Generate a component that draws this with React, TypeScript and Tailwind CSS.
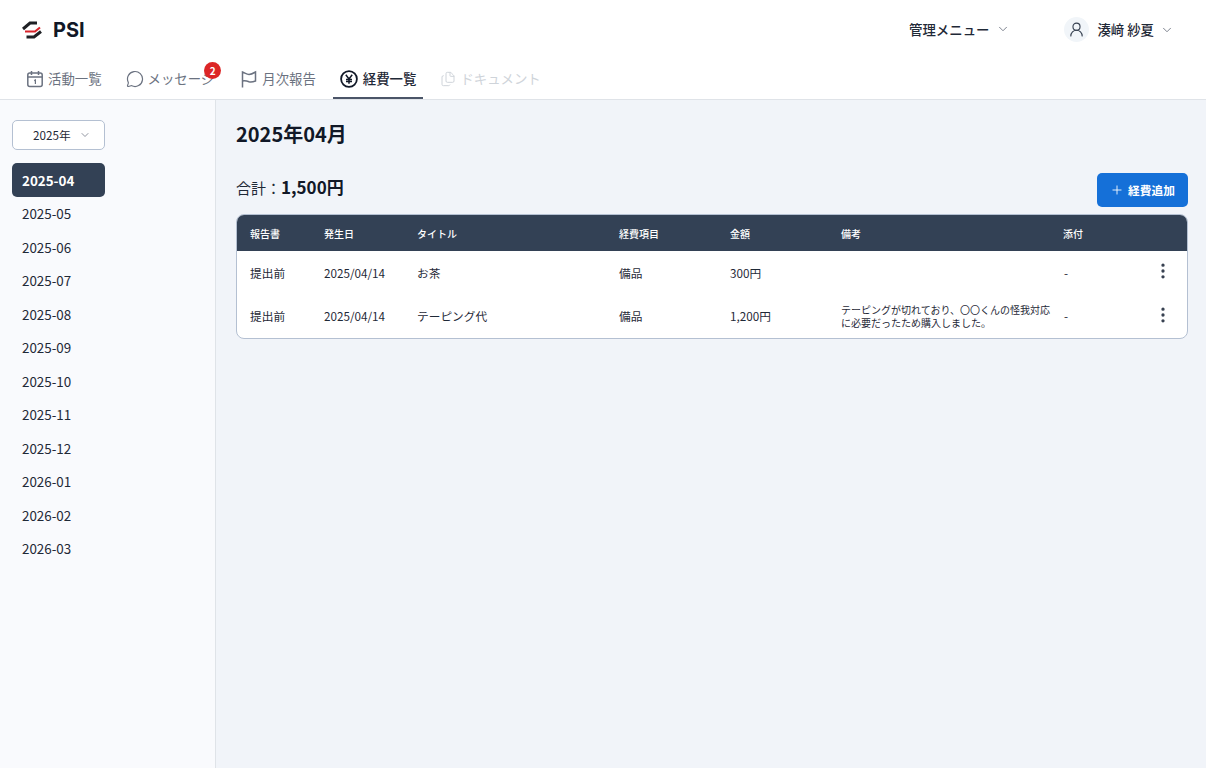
import { ChevronDown, EllipsisVertical, Files, MessageCircle, Plus, UserRound } from "lucide-react";

const months = ["2025-04", "2025-05", "2025-06", "2025-07", "2025-08", "2025-09", "2025-10", "2025-11", "2025-12", "2026-01", "2026-02", "2026-03"];

const columns = "grid grid-cols-[74px_93px_202px_111px_111px_224px_1fr]";

const Logo = () => (
  <svg width="20" height="18" viewBox="0 0 20 18" fill="none" strokeLinejoin="miter">
    <path d="M1 8 L8 2 H15" stroke="#1f2125" strokeWidth="3" />
    <path d="M3 10.5 H13 L18 6.5" stroke="#d8232a" strokeWidth="2.2" />
    <path d="M4.5 16 H12 L19 10.5" stroke="#1f2125" strokeWidth="3" />
  </svg>
);

const CalendarIcon = () => (
  <svg width="18" height="18" viewBox="0 0 18 18" fill="none" stroke="currentColor" strokeWidth="1.5">
    <rect x="1.8" y="3" width="14.4" height="13.6" rx="2" />
    <path d="M5.5 1 V5 M12.5 1 V5 M1.8 7 H16.2" />
    <path d="M8.2 10.6 L9.4 10 V14" strokeWidth="1.2" />
  </svg>
);

const FlagIcon = () => (
  <svg width="18" height="18" viewBox="0 0 18 18" fill="none" stroke="currentColor" strokeWidth="1.5">
    <path d="M2.5 17.5 V2 C5 3 7 4.5 9 4.5 C11 4.5 13 3.5 15.5 2 V11 C13 12 11 12.5 9 11.8 C7 11 5 10.5 2.5 11" />
  </svg>
);

const YenIcon = () => (
  <svg width="18" height="18" viewBox="0 0 18 18" fill="none" stroke="#111827" strokeWidth="1.8">
    <circle cx="9" cy="9" r="7.9" />
    <path d="M5.8 4.8 L9 9 L12.2 4.8 M9 9 V13.8 M6 9.4 H12 M6 11.5 H12" strokeWidth="1.5" />
  </svg>
);

function Tab({ icon, label, active, disabled, badge }: { icon: React.ReactNode; label: string; active?: boolean; disabled?: boolean; badge?: string }) {
  return (
    <div
      className={`relative flex h-[39px] items-center border-b-2 px-[7px] text-[13.4px] ${
        active ? "gap-[5px] border-[#4b5568] font-medium text-[#1f2937]" : "gap-[4px] border-transparent"
      } ${disabled ? "text-[#cfd4da]" : active ? "" : "text-[#6b7280]"} ${badge ? "mr-[2px]" : ""}`}
    >
      {icon}
      <span>{label}</span>
      {badge && (
        <span className="absolute right-[0px] top-[2px] flex h-[17px] w-[17px] items-center justify-center rounded-full bg-[#dc2626] text-[10px] font-bold text-white">
          {badge}
        </span>
      )}
    </div>
  );
}

function Row({ title, amount, note }: { title: string; amount: string; note?: string }) {
  return (
    <div className={`${columns} h-[43.5px] items-center text-[11.7px] text-[#1f2937]`}>
      <div className="pl-[13px]">提出前</div>
      <div className="pl-[13px]">2025/04/14</div>
      <div className="pl-[13px]">{title}</div>
      <div className="pl-[13px]">備品</div>
      <div className="pl-[13px]">{amount}</div>
      <div className="pl-[13px] text-[10px] leading-[13px]">{note}</div>
      <div className="flex items-center justify-between pl-[12px] pr-[14px]">
        <span>-</span>
        <EllipsisVertical size={20} strokeWidth={2} className="-mt-[3px] text-[#374151]" />
      </div>
    </div>
  );
}

export default function App() {
  return (
    <div className="flex h-[768px] flex-col bg-white font-['Noto_Sans_CJK_JP','Noto_Sans',sans-serif]">
      <header className="h-[100px] shrink-0 border-b border-[#dfe3e8] bg-white">
        <div className="flex h-[59px] items-center justify-between pl-[22px] pr-[32px]">
          <div className="flex items-center gap-[11px]">
            <Logo />
            <span className="font-['Inter',sans-serif] text-[20px] font-bold text-[#111827]">PSI</span>
          </div>
          <div className="flex items-center">
            <div className="flex items-center gap-[7px] text-[13.4px] font-medium text-[#1f2937]">
              管理メニュー
              <ChevronDown size={14} strokeWidth={1.5} className="text-[#6b7280]" />
            </div>
            <div className="ml-[54px] flex items-center gap-[7px] text-[13.4px] font-medium text-[#1f2937]">
              <span className="flex h-[25px] w-[25px] items-center justify-center rounded-full bg-[#f1f5f9]">
                <UserRound size={17} strokeWidth={1.6} className="text-[#374151]" />
              </span>
              <span className="ml-[1px]">湊﨑 紗夏</span>
              <ChevronDown size={14} strokeWidth={1.5} className="-ml-[1px] text-[#6b7280]" />
            </div>
          </div>
        </div>
        <nav className="mt-[1px] flex items-center gap-[10px] pl-[19px]">
          <Tab icon={<CalendarIcon />} label="活動一覧" />
          <Tab icon={<MessageCircle size={18} strokeWidth={1.6} />} label="メッセージ" badge="2" />
          <Tab icon={<FlagIcon />} label="月次報告" />
          <Tab icon={<YenIcon />} label="経費一覧" active />
          <Tab icon={<Files size={16} strokeWidth={1.5} />} label="ドキュメント" disabled />
        </nav>
      </header>
      <div className="flex min-h-0 flex-1">
        <aside className="w-[216px] shrink-0 border-r border-[#dfe3e8] bg-[#f9fafd] pl-[12px] pt-[20px]">
          <div className="flex h-[30px] w-[93px] items-center gap-[8px] rounded-[5px] border border-[#b4c0d2] bg-white pl-[20px] text-[11.7px] text-[#1f2937]">
            2025年
            <ChevronDown size={12} strokeWidth={1.5} className="text-[#6b7280]" />
          </div>
          <ul className="mt-[13px] w-[93px]">
            {months.map((m) => (
              <li
                key={m}
                className={`flex h-[33.5px] items-center rounded-[5px] pl-[10px] text-[13.4px] ${
                  m === "2025-04" ? "bg-[#334155] font-bold text-white" : "text-[#1f2937]"
                }`}
              >
                {m}
              </li>
            ))}
          </ul>
        </aside>
        <main className="flex-1 bg-[#f1f4f9] pl-[20px] pr-[18px] pt-[19px]">
          <h1 className="text-[20px] leading-[30px] font-bold text-[#111827]">2025年04月</h1>
          <div className="mt-[24px] flex items-center justify-between">
            <div className="-mt-[6px] text-[15px] text-[#1f2937]">
              合計：<span className="text-[17px] font-bold text-[#111827]">1,500円</span>
            </div>
            <button className="flex h-[34px] w-[91px] items-center justify-center gap-[4px] rounded-[5px] bg-[#1570d8] text-[11.7px] font-bold text-white">
              <Plus size={14} strokeWidth={1.5} />
              経費追加
            </button>
          </div>
          <div className="mt-[7px] overflow-hidden rounded-[8px] border border-[#b4c0d2] bg-white">
            <div className={`${columns} h-[36px] items-center bg-[#334155] text-[10px] font-medium text-white`}>
              <div className="pl-[13px]">報告書</div>
              <div className="pl-[13px]">発生日</div>
              <div className="pl-[13px]">タイトル</div>
              <div className="pl-[13px]">経費項目</div>
              <div className="pl-[13px]">金額</div>
              <div className="pl-[13px]">備考</div>
              <div className="pl-[11px]">添付</div>
            </div>
            <Row title="お茶" amount="300円" />
            <Row title="テーピング代" amount="1,200円" note="テーピングが切れており、〇〇くんの怪我対応に必要だったため購入しました。" />
          </div>
        </main>
      </div>
    </div>
  );
}
